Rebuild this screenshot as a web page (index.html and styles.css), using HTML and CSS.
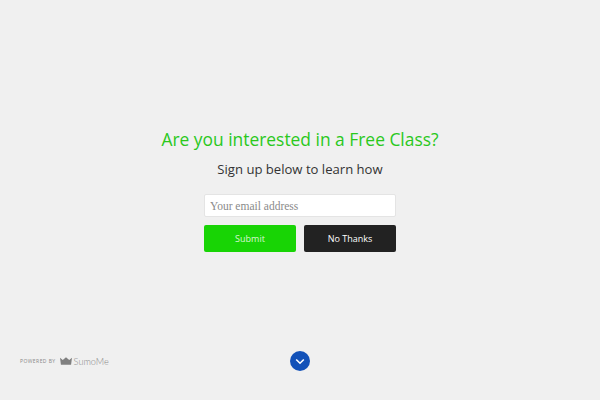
FILE: index.html
```html
<!DOCTYPE html>
<html lang="en">
<head>
    <meta charset="UTF-8">
    <title>Free Class</title>
    <link rel="stylesheet" href="styles.css">
</head>
<body>
    <div class="main">
        <h1 class="headline">Are you interested in a Free Class?</h1>
        <p class="subline">Sign up below to learn how</p>
        <form class="signup">
            <input class="email" type="text" placeholder="Your email address">
            <div class="buttons">
                <button class="btn btn-submit" type="button">Submit</button>
                <button class="btn btn-cancel" type="button">No Thanks</button>
            </div>
        </form>
    </div>
    <div class="footer">
        <div class="powered">
            <span class="powered-by">POWERED BY</span>
            <svg class="crown" width="12" height="8" viewBox="0 0 13 8"><path d="M0 .5l3 2.500L6.500 0 10 3 13 .5 12 8H1z" fill="#808080"/></svg>
            <span class="brand">SumoMe</span>
        </div>
        <div class="scroll-down">
            <svg width="10" height="7" viewBox="0 0 10 7"><path d="M1.200 1.500L5 5.200l3.800-3.700" fill="none" stroke="#fff" stroke-width="1.600"/></svg>
        </div>
        <div class="footer-end"></div>
    </div>
</body>
</html>
```

FILE: styles.css
```css
html, body {
    height: 100%;
}
body {
    margin: 0;
    background: #f0f0f0;
    font-family: "Open Sans", sans-serif;
    display: flex;
    flex-direction: column;
}
.main {
    flex: 1;
    display: flex;
    flex-direction: column;
    align-items: center;
    padding-top: 125px;
}
.headline {
    margin: 0;
    font-size: 17.4px;
    line-height: 28px;
    font-weight: 400;
    color: #2ac81c;
}
.subline {
    margin: 6px 0 0;
    font-size: 13.1px;
    line-height: 20px;
    color: #333;
}
.signup {
    width: 192px;
    margin-top: 15px;
}
.email {
    display: block;
    box-sizing: border-box;
    width: 100%;
    height: 23px;
    padding: 0 5px;
    border: 1px solid #e4e4e4;
    border-radius: 2px;
    background: #fff;
    font-family: "Liberation Serif", serif;
    font-size: 11.5px;
}
.email::placeholder {
    color: #8a8a8a;
    opacity: 1;
}
.buttons {
    display: flex;
    gap: 8px;
    margin-top: 8px;
}
.btn {
    flex: 1;
    height: 27px;
    padding: 0;
    border: none;
    border-radius: 2px;
    font-family: "Open Sans", sans-serif;
    font-size: 9px;
    color: #fff;
}
.btn-submit {
    background: #18d405;
    color: #d8f5d4;
}
.btn-cancel {
    background: #222;
}
.footer {
    display: flex;
    align-items: center;
    justify-content: space-between;
    padding: 0 20px 29px;
}
.powered, .footer-end {
    width: 100px;
}
.powered {
    display: flex;
    align-items: center;
    white-space: nowrap;
    color: #888;
}
.powered-by {
    font-size: 5px;
    letter-spacing: 0.45px;
    margin-right: 4px;
}
.brand {
    font-family: Lato, sans-serif;
    font-weight: 300;
    font-size: 9.2px;
    margin-left: 2px;
}
.scroll-down {
    width: 20px;
    height: 20px;
    border-radius: 50%;
    background: #1251b8;
    display: flex;
    align-items: center;
    justify-content: center;
}
```
